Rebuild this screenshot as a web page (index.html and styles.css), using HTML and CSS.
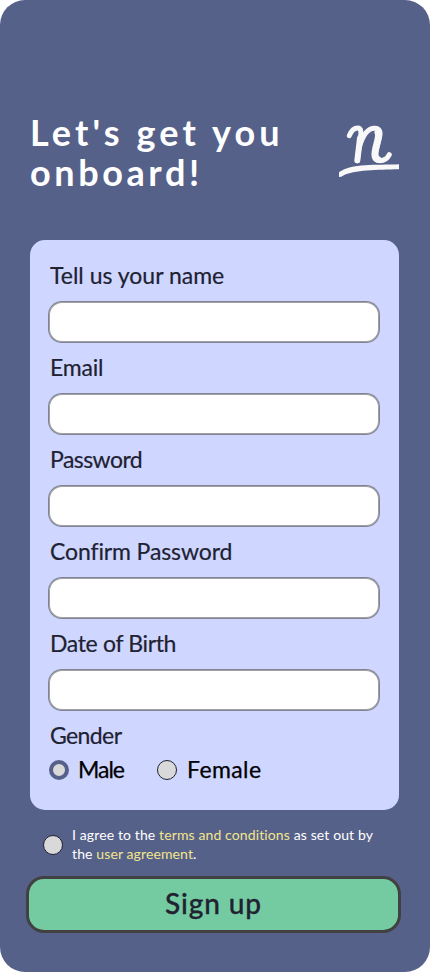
FILE: index.html
```html
<!DOCTYPE html>
<html lang="en">
<head>
<meta charset="utf-8">
<title>Sign up</title>
<link rel="stylesheet" href="styles.css">
</head>
<body>
<main class="screen">
  <header class="header">
    <h1 class="title"><span class="title-top">Let's get you</span><br><span class="title-bottom">onboard!</span></h1>
    <svg class="logo" viewBox="27 30 180 180" fill="none" stroke="#f8f8f8" stroke-linecap="round" stroke-linejoin="round" aria-hidden="true">
      <path d="M58 77C64 62 73 54 83 54C94 54 94 66 91 84L82 152" stroke-width="15"/>
      <path d="M90 84L82 151" stroke-width="18"/>
      <path d="M88 112C98 76 114 55 134 55C151 55 153 68 147 87L139 117C133 139 135 152 150 152C164 152 172 146 178 134" stroke-width="15"/>
      <path d="M144 68C149 78 141 98 138 112C134 130 132 143 143 148" stroke-width="21"/>
      <path d="M27 187C65 160 137 166 207 163V178C142 180 72 180 39 197Q34 201 27 201Z" fill="#f8f8f8" stroke="none"/>
    </svg>
  </header>
  <form class="form">
    <section class="card">
      <label class="field"><span class="label name">Tell us your name</span><input class="input" type="text"></label>
      <label class="field"><span class="label email">Email</span><input class="input" type="email"></label>
      <label class="field"><span class="label password">Password</span><input class="input" type="password"></label>
      <label class="field"><span class="label confirm">Confirm Password</span><input class="input" type="password"></label>
      <label class="field"><span class="label birth">Date of Birth</span><input class="input" type="text"></label>
      <div class="label gender">Gender</div>
      <div class="choices">
        <label class="choice"><input class="radio" type="radio" name="gender" checked><span class="male">Male</span></label>
        <label class="choice"><input class="radio" type="radio" name="gender"><span class="female">Female</span></label>
      </div>
    </section>
    <label class="terms">
      <input class="radio" type="checkbox">
      <span class="terms-text">I agree to the <a class="link">terms and conditions</a> as set out by<br>the <a class="link">user agreement</a>.</span>
    </label>
    <button class="submit" type="button">Sign up</button>
  </form>
</main>
</body>
</html>
```

FILE: styles.css
```css
* { box-sizing: border-box; }
body { margin: 0; background: #fff; font-family: Lato, sans-serif; }
.screen { width: 430px; height: 972px; padding: 113px 26px 0 30px; background: #56618a; border-radius: 25px; overflow: hidden; }
.header { display: flex; justify-content: space-between; height: 127px; padding-right: 5px; }
.title { margin: -1px 0 0; color: #fff; font-size: 36px; line-height: 40px; font-weight: 700; white-space: nowrap; }
.title-top { letter-spacing: 4.1px; }
.title-bottom { letter-spacing: 3.6px; }
.logo { width: 60px; height: 60px; margin-top: 7px; }
.card { width: 369px; height: 570px; padding: 20px 19px; background: #cfd6ff; border-radius: 15px; }
.field { display: block; height: 92px; }
.label { display: block; height: 41px; padding-left: 1px; color: #202131; font-size: 23px; line-height: 31px; white-space: nowrap; -webkit-text-stroke: .2px #202131; }
.email { letter-spacing: -.2px; }
.password { letter-spacing: -.55px; }
.confirm { letter-spacing: -.12px; font-variant-ligatures: none; }
.birth { letter-spacing: -.35px; }
.input { display: block; width: 332px; height: 42px; margin-left: -1px; padding: 0 12px; border: 1px solid rgba(65, 65, 65, .55); border-radius: 14px; background: #fff; background-clip: padding-box; box-shadow: inset 0 0 0 1px rgba(65, 65, 65, .5); font: inherit; outline: none; }
.gender { height: 35px; letter-spacing: -.6px; }
.choices { display: flex; height: 30px; font-size: 23px; line-height: 30px; color: #000; }
.choice { display: flex; align-items: center; width: 108px; gap: 10px; white-space: nowrap; -webkit-text-stroke: .25px #000; }
.choice span { margin-top: -1px; margin-bottom: 1px; }
.male { margin-left: -1px; letter-spacing: -1px; }
.female { letter-spacing: .4px; }
.radio { appearance: none; flex: none; width: 20px; height: 20px; margin: 0; border: 1px solid #202131; border-radius: 50%; background: #d9d9d9; }
.radio:checked { border: 4px solid #56618a; }
.terms { display: flex; align-items: center; height: 66px; padding: 4px 0 0 13px; gap: 9px; color: #fff; font-size: 14px; line-height: 19px; white-space: nowrap; letter-spacing: .12px; font-variant-ligatures: none; }
.terms-text { margin-top: -2px; }
.link { color: #f3e58c; }
.submit { display: block; width: 375px; height: 57px; margin-left: -4px; padding: 0 0 3px; border: 3px solid #414141; border-radius: 18px; background: #74cba1; color: #202131; font: 500 28px/48px Lato, sans-serif; letter-spacing: .9px; -webkit-text-stroke: .3px #202131; }
```
